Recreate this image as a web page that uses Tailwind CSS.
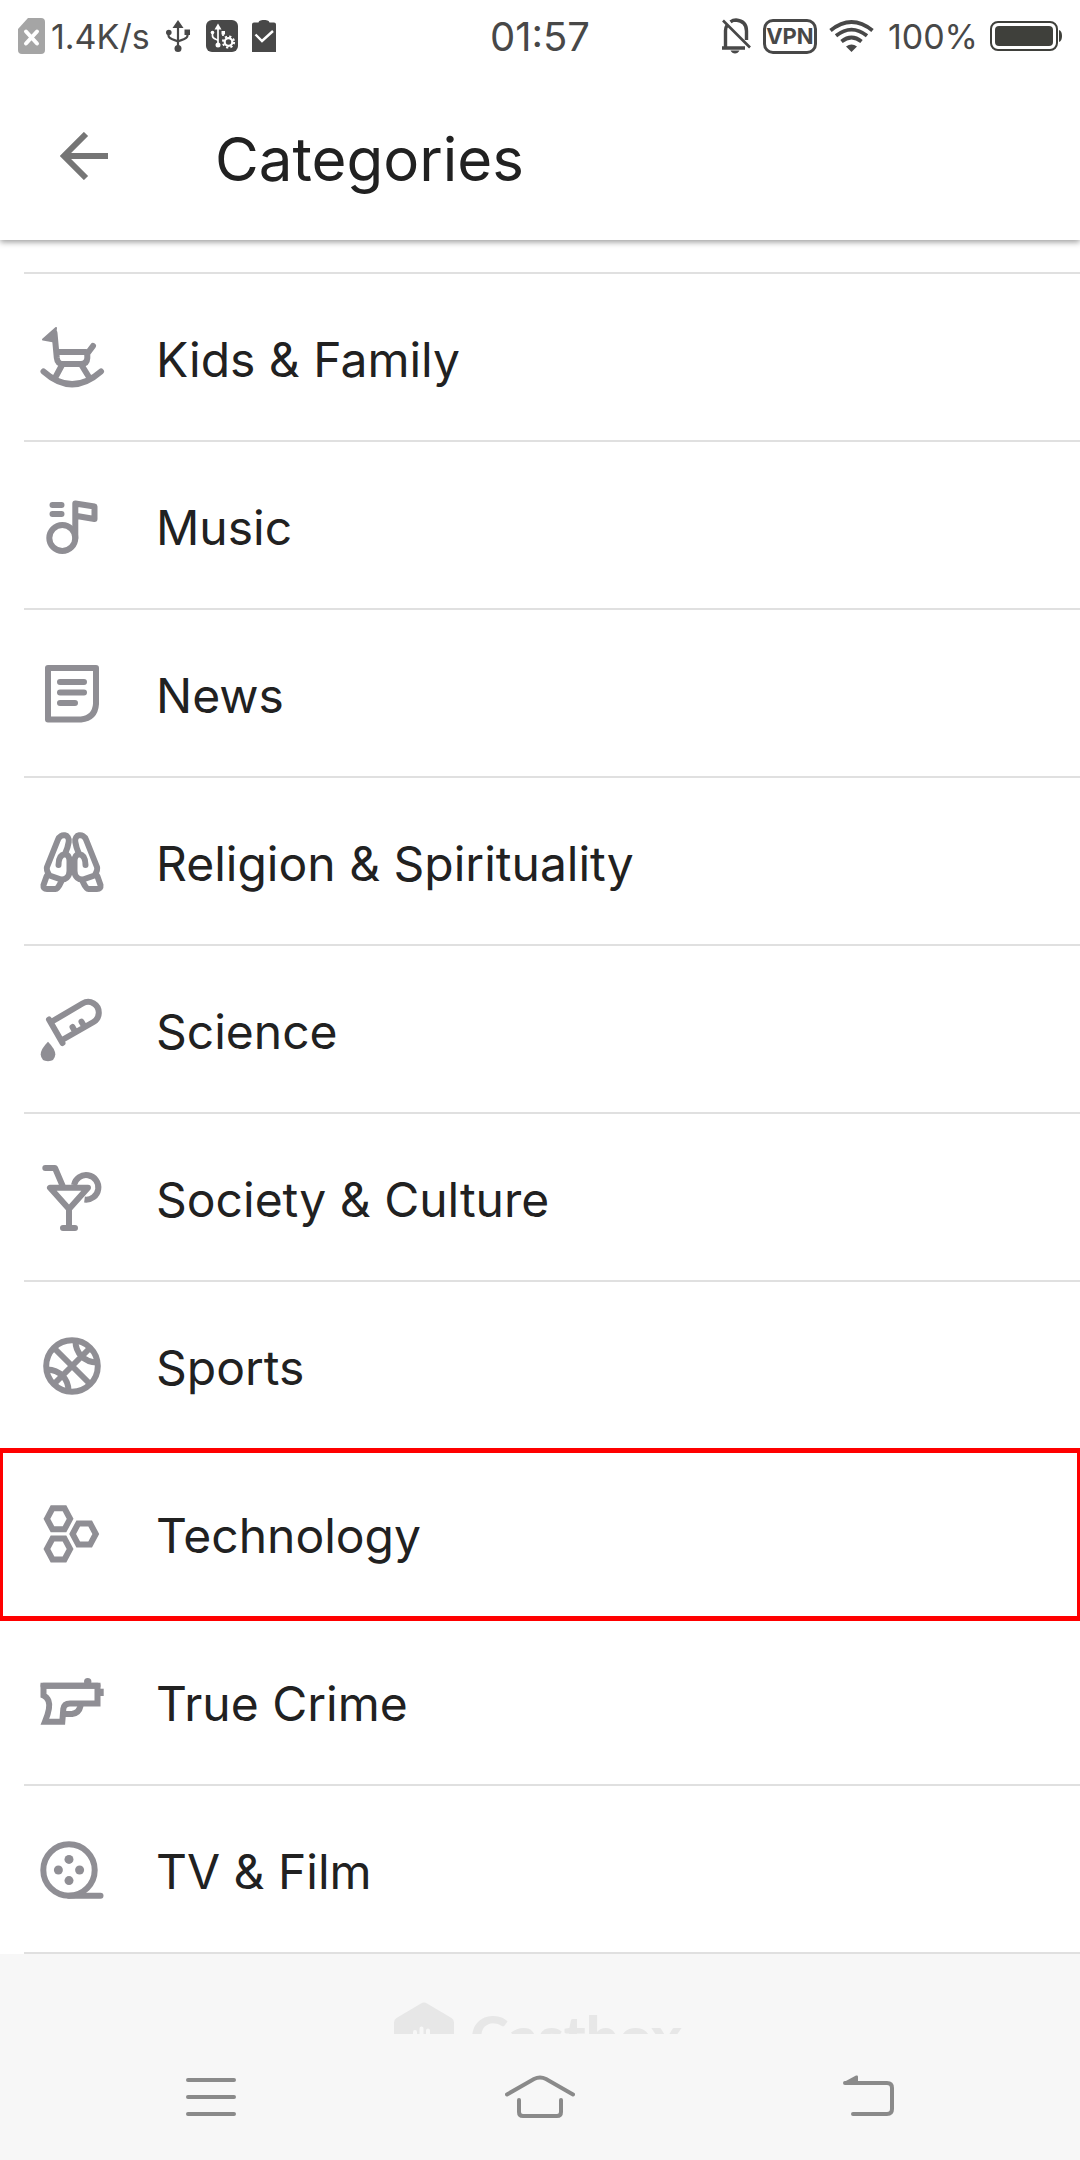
<!DOCTYPE html>
<html lang="en">
<head>
<meta charset="utf-8">
<meta name="viewport" content="width=device-width, initial-scale=1">
<title>Categories</title>
<script src="https://cdn.jsdelivr.net/npm/@tailwindcss/browser@4"></script>
</head>
<body class="flex min-h-screen flex-col overflow-x-hidden bg-white font-['Inter',sans-serif] text-[#212121]">

<!-- Status bar -->
<div class="relative z-10 grid h-[72px] shrink-0 grid-cols-[1fr_auto_1fr] items-center bg-white px-[18px] text-[34px] leading-10 text-[#484848]">
  <div class="flex items-center">
    <svg class="h-9 w-[27px]" viewBox="0 0 27 36" aria-hidden="true"><path d="M10 0H23a4 4 0 0 1 4 4V32a4 4 0 0 1-4 4H4a4 4 0 0 1-4-4V11z" fill="#a5a5a5"/><path d="M8 13.500L19 25.500M19 13.500L8 25.500" stroke="#fff" stroke-width="4" stroke-linecap="round"/></svg>
    <span class="ml-1.5 pt-0.5">1.4K/s</span>
    <svg class="ml-4 h-8 w-6" viewBox="0 0 24 32" fill="none" stroke="currentColor" stroke-width="2.200" aria-hidden="true"><path d="M12 6V28M2.500 12V15.500C2.500 20 12 20 12 22M21.500 12V15.500C21.500 20 12 20 12 22"/><g fill="currentColor" stroke="none"><path d="M12 0l5.500 8h-11z"/><circle cx="12" cy="28.500" r="3.500"/><circle cx="2.800" cy="12.500" r="2.800"/><path d="M18.500 9.500H24v5.500h-5.500z"/></g></svg>
    <svg class="ml-4 h-8 w-8" viewBox="0 0 32 32" fill="none" aria-hidden="true"><rect width="32" height="32" rx="6" fill="#484848"/><g stroke="#fff" stroke-width="1.700"><path d="M12 6V24M6.500 13V16C6.500 19.500 12 19 12 21M17 13V16"/></g><g fill="#fff"><path d="M12 3.500l3.500 6h-7z"/><circle cx="12" cy="25" r="2.500"/><circle cx="6.500" cy="12.500" r="1.800"/><path d="M15.500 11h3.500v3.500h-3.500z"/></g><circle cx="22.500" cy="22" r="5.600" stroke="#fff" stroke-width="2" stroke-dasharray="2.200 2.200"/><circle cx="22.500" cy="22" r="3.800" stroke="#fff" stroke-width="2.200"/></svg>
    <svg class="ml-3.5 h-8 w-6" viewBox="0 0 24 32" aria-hidden="true"><path d="M2 2.500H6.500C7 1 8 0 12 0s5 1 5.500 2.500H22a2 2 0 0 1 2 2V32H0V4.500a2 2 0 0 1 2-2z" fill="currentColor"/><path d="M3.500 14.500l6.500 6.500L21 11" fill="none" stroke="#fff" stroke-width="2.400"/></svg>
  </div>
  <time class="pt-0.5 text-[40px]">01:57</time>
  <div class="flex items-center justify-end">
    <svg class="h-9 w-[30px]" viewBox="0 0 30 36" fill="none" stroke="currentColor" stroke-width="3.400" aria-label="Muted"><path d="M1 30H24M4.500 30V12.500Q4.500 9.500 6 7.500M9.500 3.800Q12 2 15 2Q25.500 3 25.500 13V22"/><path d="M2 2.500L29 29.500" stroke-width="2.600"/><path d="M9.500 32.500h9q-1.500 3-4.500 3t-4.500-3z" fill="currentColor" stroke="none"/></svg>
    <span class="ml-3 flex h-[35px] w-[54px] items-center justify-center rounded-[10px] border-3 border-[#484848] text-[22px] font-bold">VPN</span>
    <svg class="ml-3 h-8 w-[45px]" viewBox="0 0 45 32" fill="none" stroke="currentColor" stroke-width="3.800" aria-label="Wi-Fi"><path d="M1.500 10.500Q22.500-6.500 43.500 10.500M7 15.800Q22.500 3.500 38 15.800M12.500 21.500Q22.500 13.500 32.500 21.500"/><path d="M17 26.500Q22.500 22.500 28 26.500L22.500 32z" fill="currentColor" stroke="none"/></svg>
    <span class="ml-3.5 pt-0.5">100%</span>
    <svg class="ml-3 h-[30px] w-[72px]" viewBox="0 0 72 30" aria-label="Battery full"><rect x="1" y="1" width="66" height="28" rx="7" fill="none" stroke="#3f403b" stroke-width="2"/><rect x="5" y="5" width="58" height="20" rx="4" fill="#3f403b"/><path d="M69 9q3 1 3 6t-3 6z" fill="#3f403b"/></svg>
  </div>
</div>

<!-- App bar -->
<header class="flex h-[168px] shrink-0 items-center pl-[60px] shadow-[0_2px_6px_rgba(0,0,0,0.4)]">
  <button type="button" aria-label="Back" class="shrink-0">
    <svg class="h-12 w-12 text-[#757575]" viewBox="0 0 48 48" fill="none" stroke="currentColor" stroke-width="6"><path d="M48 24H5M26 2L4 24l22 22"/></svg>
  </button>
  <h1 class="ml-[107px] pt-1.5 text-[60px] leading-20">Categories</h1>
</header>

<!-- Category list -->
<main class="grow">
  <ul class="pt-8 [&_svg]:size-[72px] [&_svg]:shrink-0 [&_svg]:fill-none [&_svg]:stroke-[#8f8e94] [&_svg]:stroke-6 [&_svg]:[stroke-linecap:round] [&_svg]:[stroke-linejoin:round] [&_a]:flex [&_a]:h-[168px] [&_a]:items-center [&_a]:gap-12 [&_a]:border-b-2 [&_a]:border-[#e0e0e0] [&_a]:pl-3 [&_li]:pl-6 [&_span]:pt-1.5 [&_span]:text-[48px] [&_span]:leading-16">
    <li aria-hidden="true"><div class="h-0.5 bg-[#e0e0e0]"></div></li>
    <li><a href="#kids">
      <svg viewBox="0 0 72 72" aria-hidden="true"><path d="M20 7L7 18.500L18 20.500z" fill="#8f8e94" stroke-width="2"/><path d="M18.500 12L20.800 37q.7 6 6 6H45q6 0 6.300-6V33M22 31H50M57 25L51 33" stroke-width="6"/><path d="M26 44L19 57M45.500 44L53.500 57M7.500 50.500Q36 76 65 50.500"/></svg>
      <span>Kids &amp; Family</span></a></li>
    <li><a href="#music">
      <svg viewBox="0 0 72 72" aria-hidden="true"><circle cx="26.300" cy="49" r="13"/><path d="M39.300 49V14.500L58.500 17.500V30L39.300 26.700M16.500 16H25.500M16.500 25H25.500"/></svg>
      <span>Music</span></a></li>
    <li><a href="#news">
      <svg viewBox="0 0 72 72" aria-hidden="true"><path d="M12 11H60V47Q59 61 45 62.500H12zM24 25H48M24 35.500H48M24 46H39"/></svg>
      <span>News</span></a></li>
    <li><a href="#religion">
      <svg viewBox="0 0 72 72" aria-hidden="true"><path id="hand" d="M11 42L22 14.500C24.500 8 34 9 32.700 17Q32 22 29 29Q22.500 30 22.500 40M29 29Q33.500 30 33.500 36V46C33.500 52 29 55 25 54.500L13.500 50.500Q10 45 11 42M10.700 51L7.500 60Q7 64 11 64H19.500Q22 64 25.500 56"/><use href="#hand" transform="matrix(-1 0 0 1 72 0)"/></svg>
      <span>Religion &amp; Spirituality</span></a></li>
    <li><a href="#science">
      <svg viewBox="0 0 72 72" aria-hidden="true"><path d="M13 26.500L26.500 50M16 28.500L46.500 10.500C54 6 63 11.500 62.800 20Q62.500 26 57.500 29L27 46.500M36.500 34L39 38.500M45.500 28.700L48 33"/><path d="M12 48.700Q19.300 56 19.300 61.500Q18.800 68.300 12 68.300T4.700 61.500Q4.700 56 12 48.700z" fill="#8f8e94" stroke="none"/></svg>
      <span>Science</span></a></li>
    <li><a href="#society">
      <svg viewBox="0 0 72 72" aria-hidden="true"><path d="M9.300 7H19L26.700 25M14 26.700H52L33 48zM33 48V67M27 67H39"/><path d="M38 24A12.300 12.300 0 1 1 48.500 38.600" stroke-linecap="butt"/></svg>
      <span>Society &amp; Culture</span></a></li>
    <li><a href="#sports">
      <svg viewBox="0 0 72 72" aria-hidden="true"><circle cx="36" cy="37" r="25.800"/><path d="M19 20L54 55M54 19L18 55M39.500 12C39.500 24 48 33 61 33.500M32.500 62C32.500 50 24 41 11 40.500" stroke-linecap="butt"/></svg>
      <span>Sports</span></a></li>
    <li class="relative">
      <a href="#technology">
      <svg viewBox="0 0 72 72" aria-hidden="true" class="[&_path]:[stroke-linejoin:miter]"><path d="M10.900 21.800L16.500 11.300H28.500L34.100 21.800L28.500 32.300H16.500zM10.900 52L16.500 41.500H28.500L34.100 52L28.500 62.500H16.500zM36.600 37L42.200 26.500H54.200L59.800 37L54.200 47.500H42.200z"/></svg>
      <span>Technology</span></a>
      <div class="pointer-events-none absolute inset-x-0 -top-0.5 -bottom-[3px] border-x-3 border-y-5 border-[#ff0000]"></div>
    </li>
    <li><a href="#true-crime">
      <svg viewBox="0 0 72 72" aria-hidden="true"><path d="M7.500 20.700H61.500V38.500H34Q28 38.500 27.300 44L26.300 56.700H9Q15 42 12.500 36Q11 32 7.500 30.500z" stroke-linejoin="miter"/><path d="M7.500 20.700H61.500M29 49H36Q43 48 44.500 41"/><circle cx="51.700" cy="16.800" r="3.700" fill="#8f8e94" stroke="none"/><path d="M62 23.700H67.700V31H62z" fill="#8f8e94" stroke="none"/></svg>
      <span>True Crime</span></a></li>
    <li><a href="#tv-film">
      <svg viewBox="0 0 72 72" aria-hidden="true"><circle cx="33" cy="37" r="25.700"/><path d="M33 62.700H64.500"/><g fill="#8f8e94" stroke="none"><circle cx="33" cy="26.400" r="4.500"/><circle cx="22.400" cy="37" r="4.500"/><circle cx="43.600" cy="37" r="4.500"/><circle cx="33" cy="47.600" r="4.500"/></g></svg>
      <span>TV &amp; Film</span></a></li>
  </ul>
</main>

<!-- Brand footer, cut off by the navigation bar -->
<footer class="flex h-20 shrink-0 items-start justify-center gap-4 overflow-hidden bg-[#f7f7f7] pt-12 pr-1 text-[#e7e7e7]">
  <svg class="h-[68px] w-[60px] shrink-0" viewBox="0 0 60 68" aria-hidden="true"><path d="M27 1.500q3-1.800 6 0L57.500 16q2.500 1.500 2.500 4.500V48q0 3-2.500 4.500L33 66.500q-3 1.800-6 0L2.500 52.500Q0 51 0 48V20.500Q0 17.500 2.500 16z" fill="currentColor"/><path d="M21 30V42M27.500 26.500V46M34 28.500V42" stroke="#f7f7f7" stroke-width="4" stroke-linecap="round"/></svg>
  <p class="font-['Lato',sans-serif] text-[58px] leading-[68px] font-black">Castbox</p>
</footer>

<!-- System navigation -->
<nav class="flex h-[126px] shrink-0 items-center justify-between bg-[#f7f7f7] px-[186px] text-[#8a8a8a]" aria-label="System">
  <button type="button" aria-label="Recent apps"><svg class="h-11 w-[50px]" viewBox="0 0 50 44" fill="none" stroke="currentColor" stroke-width="4" stroke-linecap="round"><path d="M2 5H48M2 22H48M2 39H48"/></svg></button>
  <button type="button" aria-label="Home"><svg class="h-11 w-[70px]" viewBox="0 0 70 44" fill="none" stroke="currentColor" stroke-width="4" stroke-linecap="round"><path d="M2 19.500L29 4Q35 1 41 4L68 19.500M14 25V37q0 4 4 4H52q4 0 4-4V25"/></svg></button>
  <button type="button" aria-label="Back"><svg class="h-11 w-[51px]" viewBox="0 0 51 44" fill="none" stroke="currentColor" stroke-width="4" stroke-linecap="round"><path d="M2 8H44q5 0 5 5V34q0 5-5 5H10"/><path d="M1 7L13 .500q2-.5 2 1V8H2z" fill="currentColor" stroke="none"/></svg></button>
</nav>
</body>
</html>
